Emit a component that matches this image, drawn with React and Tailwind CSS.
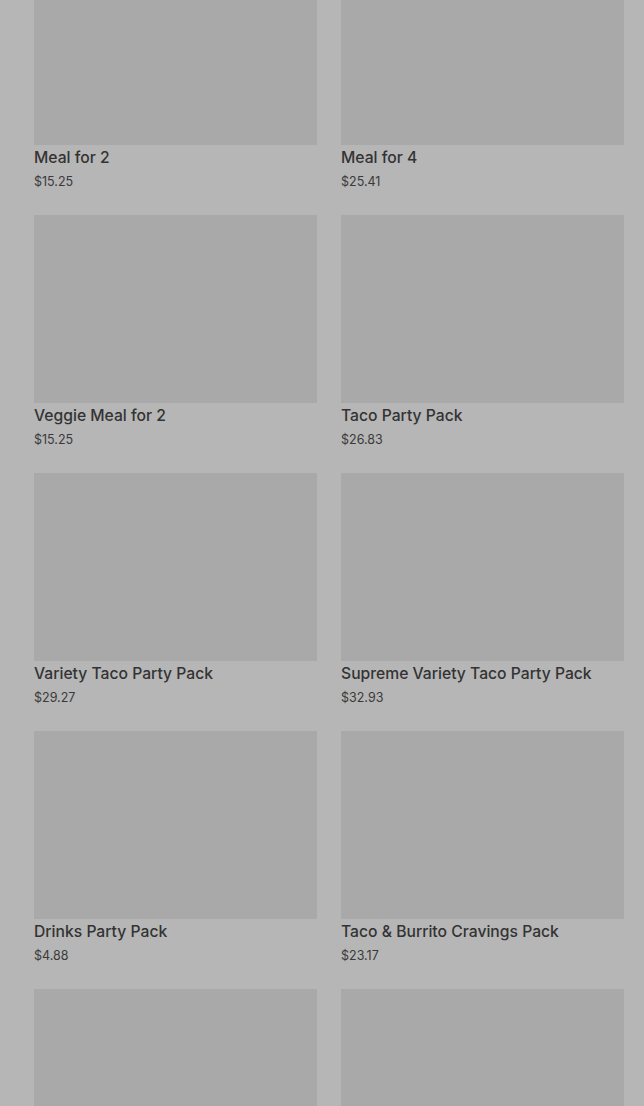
import React from "react"

const items = [
  { name: "Meal for 2", price: "$15.25" },
  { name: "Meal for 4", price: "$25.41" },
  { name: "Veggie Meal for 2", price: "$15.25" },
  { name: "Taco Party Pack", price: "$26.83" },
  { name: "Variety Taco Party Pack", price: "$29.27" },
  { name: "Supreme Variety Taco Party Pack", price: "$32.93" },
  { name: "Drinks Party Pack", price: "$4.88" },
  { name: "Taco & Burrito Cravings Pack", price: "$23.17" },
  { id: "next-1" },
  { id: "next-2" },
]

const ItemCard = ({ item }) => (
  <div className="flex flex-col">
    <div className="h-[188px] w-full bg-[#a9a9a9]" />
    <div className="pt-[2px] h-[70px]">
      {item.name && (
        <>
          <p className="text-[15.7px] leading-[22px] font-medium text-[#333333]">{item.name}</p>
          <p className="mt-[2px] text-[12.5px] leading-[22px] text-[#3a3a3a]">{item.price}</p>
        </>
      )}
    </div>
  </div>
)

export default function App() {
  return (
    <div
      className="h-[1106px] w-full overflow-hidden bg-[#b6b6b6]"
      style={{ fontFamily: "Inter, Roboto, 'Noto Sans', sans-serif" }}
    >
      <div className="-mt-[43px] pl-[34px] pr-[20px] grid grid-cols-2 gap-x-[24px]">
        {items.map((item) => (
          <ItemCard key={item.name || item.id} item={item} />
        ))}
      </div>
    </div>
  )
}
